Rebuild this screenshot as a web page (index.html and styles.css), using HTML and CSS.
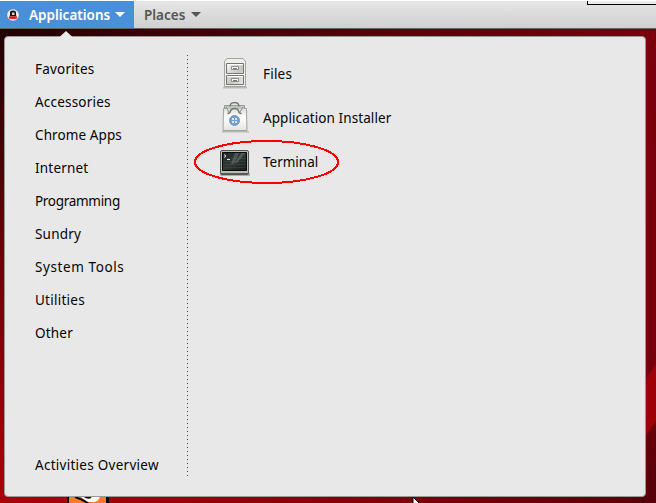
FILE: index.html
```
<!DOCTYPE html>
<html lang="en">
<head>
<meta charset="utf-8">
<title>Applications</title>
<link rel="stylesheet" href="styles.css">
</head>
<body>
<div class="desktop">
  <svg class="wallpaper" width="656" height="503" viewBox="0 0 656 503">
    <defs>
      <linearGradient id="left" x2="0" y2="1"><stop offset="0" stop-color="#200004"/><stop offset=".2" stop-color="#3d0005"/><stop offset=".5" stop-color="#710006"/><stop offset=".8" stop-color="#98000a"/><stop offset="1" stop-color="#a8000a"/></linearGradient>
      <linearGradient id="top"><stop offset="0" stop-color="#220004"/><stop offset=".4" stop-color="#4b0009"/><stop offset="1" stop-color="#7c000c"/></linearGradient>
      <linearGradient id="bottom"><stop offset="0" stop-color="#a8000a"/><stop offset=".5" stop-color="#850009"/><stop offset="1" stop-color="#560008"/></linearGradient>
      <linearGradient id="right" x2="0" y2="1"><stop offset="0" stop-color="#7b000c"/><stop offset=".7" stop-color="#76000b"/><stop offset="1" stop-color="#560008"/></linearGradient>
    </defs>
    <path fill="url(#left)" d="M0 28h12v475H0z"/>
    <path fill="url(#top)" d="M0 28h656v15H0z"/>
    <path fill="url(#bottom)" d="M4 490h652v13H4z"/>
    <path fill="url(#right)" d="M640 28h16v475h-16z"/>
    <path fill="#9d0007" d="M640 388L656 364V421L640 444z"/>
    <path fill="#000" d="M67 495h42v8H67z"/>
    <path fill="#ff7a2c" d="M69 495h37v8H69z"/>
    <path fill="#fff" d="M80 495h20q0 5-5 7h-7q-5-2-8-7z"/>
    <path fill="none" stroke="#000" stroke-width="2" d="M75 497q7 2 14 7M84 496q4 3 7 1"/>
    <path fill="#fff" stroke="#000" d="M413 497v9h9z"/>
  </svg>

  <header class="topbar">
    <div class="tab tab-active">
      <svg class="logo" width="14" height="14" viewBox="0 0 14 14">
        <circle cx="7" cy="7" r="5.800" fill="#f3e9e7"/>
        <path fill="#151515" d="M4 7V4.500q0-2 3-2T10 4.500v2.500l.5 1.500h-7z"/>
        <path fill="#ead0b8" d="M6 4.500h2.500V7H6z"/>
        <path fill="#e3201b" d="M3 8.500h8v2q-4 1-8 0z"/>
      </svg>
      <span>Applications</span>
      <i class="arrow"></i>
    </div>
    <div class="tab tab-places"><span>Places</span><i class="arrow"></i></div>
  </header>
  <div class="window-edge"></div>

  <main class="menu">
    <svg class="pointer" width="12" height="7" viewBox="0 0 12 7"><path fill="#e8e8e8" d="M0 7V5.500L6 0l6 5.500V7z"/></svg>
    <nav class="categories">
      <div class="category">Favorites</div>
      <div class="category">Accessories</div>
      <div class="category chrome">Chrome Apps</div>
      <div class="category">Internet</div>
      <div class="category programming">Programming</div>
      <div class="category">Sundry</div>
      <div class="category system">System Tools</div>
      <div class="category utilities">Utilities</div>
      <div class="category">Other</div>
      <div class="category overview">Activities Overview</div>
    </nav>
    <div class="divider"></div>
    <section class="apps">
      <div class="app">
        <svg width="32" height="32" viewBox="0 0 32 32">
          <defs><linearGradient id="metal" x2="1" y2="1"><stop stop-color="#f7f7f5"/><stop offset=".55" stop-color="#c6c6c3"/><stop offset="1" stop-color="#e8e8e5"/></linearGradient></defs>
          <path fill="#000" opacity=".2" d="M4 29h24v1.500H4z"/>
          <path fill="#eeeeec" stroke="#a2a49f" d="M5.500 28.500V3.500L8 .5h16l2.500 3v25z"/>
          <path fill="url(#metal)" stroke="#747671" d="M7.500 5.500h17v10h-17zM7.500 17.500h17v9h-17z"/>
          <path fill="none" stroke="#fff" d="M8 6.500h16M8 18.500h16M6.500 16.500h19"/>
          <path fill="#f7f7f7" stroke="#8b8d88" d="M12.500 8.500h7v3h-7zM12.500 20.500h7v3h-7z"/>
          <path stroke="#777974" d="M14 10.500h4M14 22.500h4"/>
        </svg>
        <span>Files</span>
      </div>
      <div class="app">
        <svg width="32" height="32" viewBox="0 0 32 32">
          <defs><linearGradient id="bag" x2="0" y2="1"><stop stop-color="#ddddda"/><stop offset=".4" stop-color="#fff"/><stop offset="1" stop-color="#e4e4e1"/></linearGradient></defs>
          <path fill="#000" opacity=".2" d="M3 29h27v1.500H3z"/>
          <path fill="#b9bab7" stroke="#999b97" d="M5.500 8V3.500h20V8"/>
          <path fill="url(#bag)" stroke="#a1a39f" d="M4.500 6.500h23l.5 22H4z"/>
          <path fill="#c2c4bf" d="M7 4h18v3H7z"/>
          <path fill="none" stroke="#73756f" stroke-width="1.300" d="M11 4.500q0-4 4.500-4T20 4.500M8.500 11.500q2.500 0 3-2.500.5-2.500 4-2.500t4 2.500q.5 2.500 3 2.500"/>
          <path fill="none" stroke="#8b8d88" d="M7 5l3 5M24 5l-3 5"/>
          <circle cx="15.500" cy="18.500" r="5" fill="#729fcf" stroke="#7599cb"/>
          <path fill="#dce8f6" d="M13 16h2v2h-2zM16 16h2v2h-2zM13 19h2v2h-2zM16 19h2v2h-2z"/>
        </svg>
        <span class="installer">Application Installer</span>
      </div>
      <div class="app">
        <svg width="32" height="32" viewBox="0 0 32 32">
          <defs><linearGradient id="screen" x2="1" y2="1"><stop stop-color="#202825"/><stop offset=".5" stop-color="#303936"/><stop offset="1" stop-color="#151b19"/></linearGradient></defs>
          <rect x="1" y="27" width="30" height="3" fill="#000" opacity=".25"/>
          <rect x="1.500" y="4.500" width="28" height="24" rx="1.500" fill="#babcb7" stroke="#555753"/>
          <path stroke="#555753" d="M2 27.500h27"/>
          <path fill="url(#screen)" stroke="#080b0a" d="M3.500 6.500h24v18h-24z"/>
          <path stroke="#46524d" stroke-width=".4" d="M4 12.500h23M4 15.500h23M4 18.500h23M4 21.500h23"/>
          <path fill="#abb4b0" opacity=".28" d="M16 7h4l-5 11h-3zM22 7h4l-8 10h-2z"/>
          <path fill="none" stroke="#e5ebe8" d="M5 8.500l2 1.500L5 11.500M8 13.500h3"/>
        </svg>
        <span class="terminal">Terminal</span>
      </div>
    </section>
    <svg class="annotation" width="148" height="48" viewBox="0 0 148 48" shape-rendering="crispEdges"><ellipse cx="73.500" cy="24" rx="71.500" ry="21" fill="none" stroke="#f00" stroke-width="2"/></svg>
  </main>
</div>
</body>
</html>
```
FILE: styles.css
```
* { box-sizing: border-box; }
body { margin: 0; overflow: hidden; font: 13.5px/20px "Noto Sans", sans-serif; color: #050505; }
.desktop { position: relative; width: 656px; height: 503px; overflow: hidden; background: #820008; }
.wallpaper { position: absolute; left: 0; top: 0; }
.topbar { position: relative; display: flex; height: 29px; border-top: 1px solid #fff; border-bottom: 1px solid #656565; background: linear-gradient(#e6e6e6, #d0d0d0); font-weight: 600; color: #555; }
.tab { display: flex; align-items: center; white-space: nowrap; }
.tab-active { width: 134px; padding-left: 6px; background: #4a90d9; color: #fff; }
.logo { margin-right: 9px; }
.tab-places { padding-left: 10px; }
.arrow { width: 0; height: 0; margin-left: 5px; border: 5px solid transparent; border-top-color: currentColor; border-bottom: 0; }
.tab-places .arrow { margin-left: 6px; }
.window-edge { position: absolute; right: 0; top: 1px; width: 69px; height: 4px; border-left: 1px solid #000; border-bottom: 1px solid #000; background: #ededed; }
.menu { position: relative; display: flex; width: 642px; height: 461px; margin: 7px 0 0 4px; background: #e8e8e8; border: 1px solid #999; border-radius: 4px; }
.pointer { position: absolute; left: 55px; top: -6px; }
.categories { display: flex; flex-direction: column; width: 182px; padding: 15px 0 15px 30px; }
.category { display: flex; align-items: center; height: 33px; white-space: nowrap; letter-spacing: .2px; }
.overview { margin-top: auto; letter-spacing: .27px; }
.chrome { letter-spacing: .1px; }
.programming { letter-spacing: -.3px; }
.system { letter-spacing: .6px; }
.utilities { letter-spacing: .25px; }
.divider { width: 1px; margin: 18px 0; background: repeating-linear-gradient(#444 0 1px, transparent 1px 4px); }
.apps { padding: 15px 0 0 31px; }
.app { display: flex; align-items: center; height: 44px; gap: 12px; white-space: nowrap; letter-spacing: .2px; }
.app svg { flex: none; }
.installer { letter-spacing: .08px; }
.terminal { letter-spacing: 0; }
.annotation { position: absolute; left: 188px; top: 101px; }
```
